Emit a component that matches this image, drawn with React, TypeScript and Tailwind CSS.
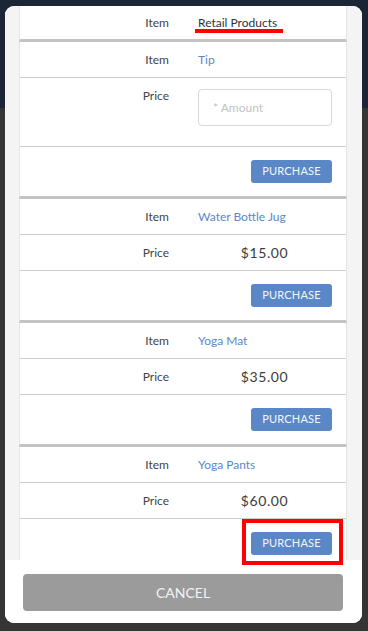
import React from 'react';

interface Product {
    name: string;
    price?: string;
}

const products: Product[] = [
    { name: 'Water Bottle Jug', price: '$15.00' },
    { name: 'Yoga Mat', price: '$35.00' },
    { name: 'Yoga Pants', price: '$60.00' },
];

const PurchaseRow: React.FC = () => (
    <div className="h-[49px] flex items-center justify-end pr-[14px]">
        <button className="w-[81px] h-[23px] rounded-[3px] bg-[#5a87c6] text-[#f4f7fc] text-[11px] tracking-[0.2px] uppercase">
            Purchase
        </button>
    </div>
);

const ItemRow: React.FC<{ value: string }> = ({ value }) => (
    <div className="grid grid-cols-2 items-center border-b border-[#cfcfcf] h-[36px]">
        <div className="text-right pr-[14px] text-[12px] text-[#444]">Item</div>
        <div className="pl-[15px] text-[12px] text-[#5b88c9]">{value}</div>
    </div>
);

const ProductCard: React.FC<{ product: Product }> = ({ product }) => (
    <div className="bg-white border-x border-[#e4e4e4] border-b-[3px] border-b-[#c4c4c4]">
        <ItemRow value={product.name} />
        <div className="grid grid-cols-2 items-center h-[36px] border-b border-[#cfcfcf]">
            <div className="text-right pr-[14px] text-[12px] text-[#444]">Price</div>
            <div className="pl-[15px] pr-[15px] text-center text-[14px] tracking-[0.6px] text-[#3c3c3c]">{product.price}</div>
        </div>
        <PurchaseRow />
    </div>
);

const App: React.FC = () => {
    return (
        <div className="relative w-[368px] h-[631px] overflow-hidden bg-[#353535]" style={{ fontFamily: 'Lato, "Open Sans", sans-serif' }}>
            <div className="h-[108px] bg-[#1b2535]" />

            {/* modal */}
            <div className="absolute left-[5px] top-[6px] w-[357px] h-[617px] rounded-[9px] bg-white overflow-hidden flex flex-col">
                <div className="flex-1 overflow-hidden bg-[#f4f4f4] pl-[14px] pr-[15px]">
                    <div className="bg-white border-x border-[#e4e4e4] border-b-[3px] border-b-[#c4c4c4]">
                        <div className="grid grid-cols-2 items-center h-[33px]">
                            <div className="text-right pr-[14px] text-[12px] text-[#444]">Item</div>
                            <div className="pl-[15px] text-[12px] text-[#333]">Retail Products</div>
                        </div>
                    </div>

                    <div className="bg-white border-x border-[#e4e4e4] border-b-[3px] border-b-[#c4c4c4]">
                        <ItemRow value="Tip" />
                        <div className="grid grid-cols-2 h-[69px] border-b border-[#cfcfcf]">
                            <div className="text-right pr-[14px] pt-[9px] text-[12px] text-[#444]">Price</div>
                            <div className="pl-[15px] pr-[14px] pt-[11px]">
                                <input
                                    placeholder="* Amount"
                                    className="w-full h-[37px] rounded-[4px] border border-[#d9d9d9] px-[14px] text-[12px] placeholder:text-[#c2c2c2] outline-none"
                                />
                            </div>
                        </div>
                        <PurchaseRow />
                    </div>

                    {products.map((p) => (
                        <ProductCard key={p.name} product={p} />
                    ))}
                </div>

                <div className="h-[63px] shrink-0 bg-white pt-[14px] pl-[18px] pr-[19px]">
                    <button className="w-full h-[37px] rounded-[4px] bg-[#9b9b9b] text-[#f2f2f2] text-[14px] uppercase">
                        Cancel
                    </button>
                </div>
            </div>

            {/* annotations */}
            <div className="absolute left-[195px] top-[29px] w-[88px] h-[4px] bg-[#ff0000]" />
            <div className="absolute left-[242px] top-[519px] w-[101px] h-[46px] border-4 border-[#ff0000]" />
        </div>
    );
};

export default App;
